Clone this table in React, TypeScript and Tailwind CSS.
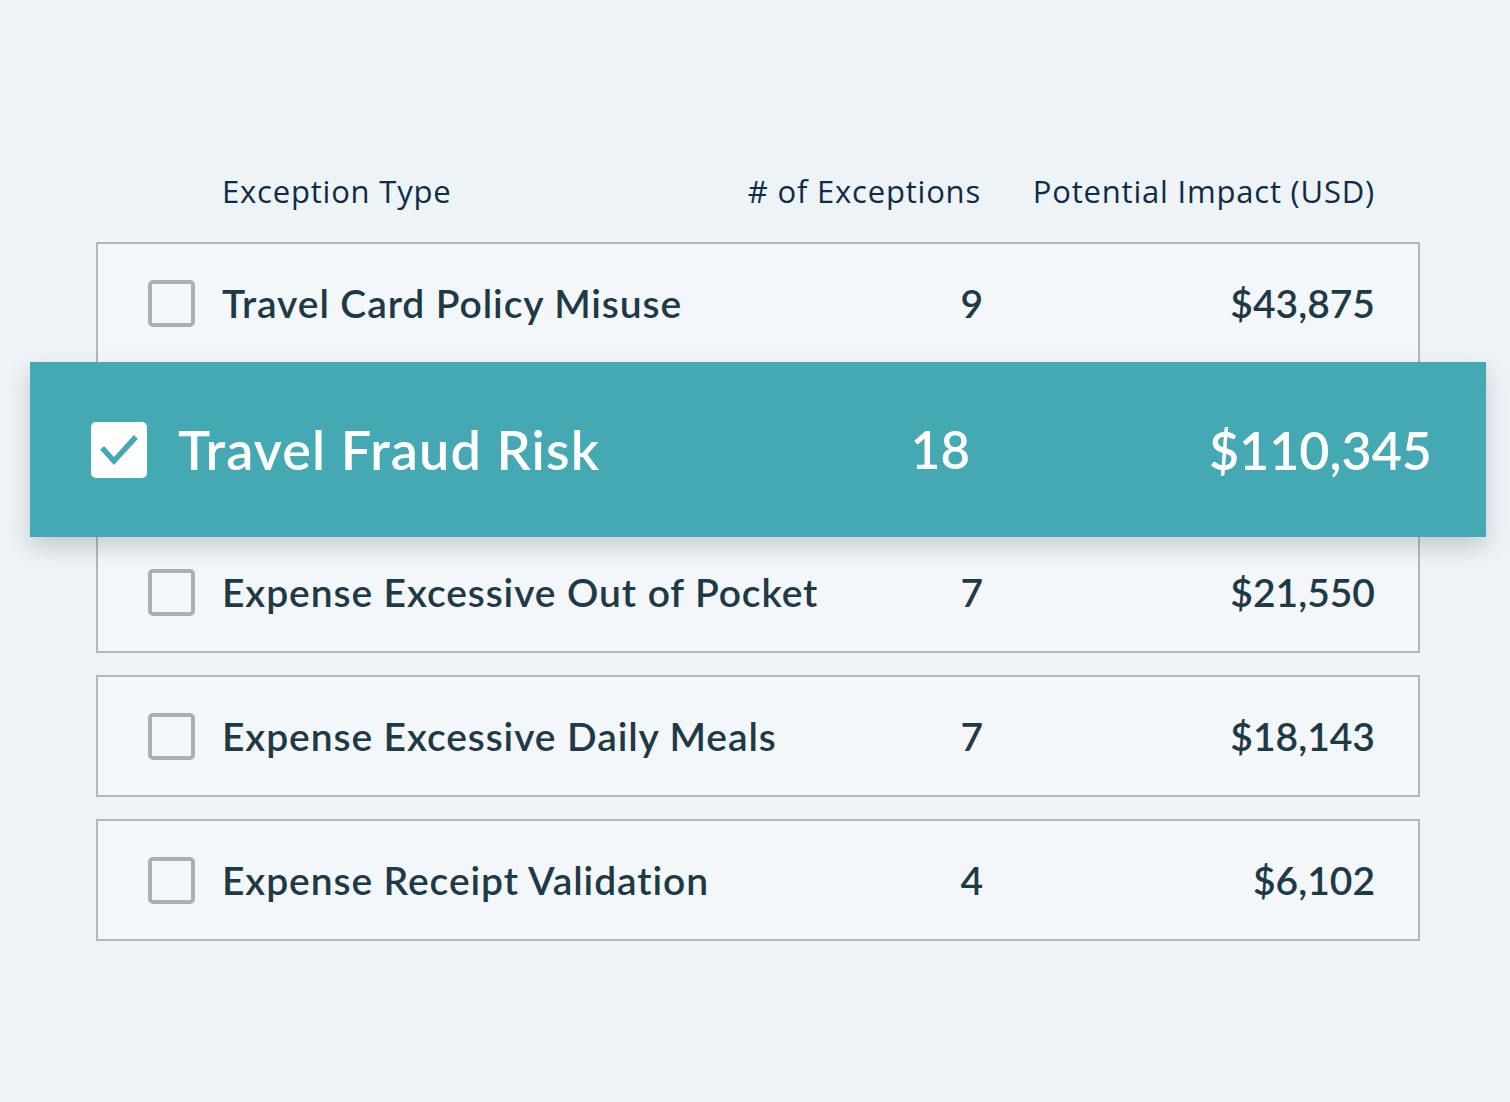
import React from "react";

const rows = [
  { name: "Travel Card Policy Misuse", count: "9", amount: "$43,875", active: false },
  { name: "Travel Fraud Risk", count: "18", amount: "$110,345", active: true },
  { name: "Expense Excessive Out of Pocket", count: "7", amount: "$21,550", active: false },
  { name: "Expense Excessive Daily Meals", count: "7", amount: "$18,143", active: false },
  { name: "Expense Receipt Validation", count: "4", amount: "$6,102", active: false },
];

const font = { fontFamily: "Lato, 'Open Sans', sans-serif" };
const headFont = { fontFamily: "'Open Sans', Lato, sans-serif" };

export default function App() {
  return (
    <div className="min-h-[1102px] w-[1510px] bg-[#eef3f6]" style={font}>
      <div className="pt-[166px] pl-[96px] w-[1420px]">
        <div
          className="flex h-[50px] items-center pl-[126px] pr-[45px] text-[31px] font-medium text-[#0f2d48] tracking-[0.8px]"
          style={headFont}
        >
          <div className="flex-1">Exception Type</div>
          <div className="w-[300px] text-right pr-[2px]">
            # of Exceptions
          </div>
          <div className="w-[392px] text-right">Potential Impact (USD)</div>
        </div>
        <div className="mt-[26px] flex flex-col gap-[22px]">
          {rows.map((r) =>
            r.active ? (
              <div
                key={r.name}
                className="relative z-10 mx-[-66px] mt-[-24px] mb-[-28px] flex h-[175px] items-center bg-[#44a9b3] pl-[61px] pr-[54px] shadow-[0_10px_22px_rgba(40,60,70,0.22)] text-white"
              >
                <div className="flex h-[56px] w-[56px] items-center justify-center rounded-[5px] bg-white">
                  <svg width="40" height="40" viewBox="0 0 40 40" fill="none">
                    <path
                      d="M5 20 L15 31 L35 9"
                      stroke="#44a9b3"
                      strokeWidth="5.5"
                      strokeLinecap="square"
                      strokeLinejoin="miter"
                    />
                  </svg>
                </div>
                <div className="ml-[31px] flex-1 text-[54px] font-semibold leading-none tracking-[1.1px]">
                  {r.name}
                </div>
                <div className="w-[100px] text-right text-[51px] font-semibold leading-none">
                  {r.count}
                </div>
                <div className="w-[462px] text-right text-[52px] font-semibold leading-none">
                  {r.amount}
                </div>
              </div>
            ) : (
              <div
                key={r.name}
                className="flex h-[122px] items-center border-2 border-[#b3b8bb] bg-[#f3f7f9] pl-[50px] pr-[43px] text-[#1e3a46]"
              >
                <div className="h-[47px] w-[47px] rounded-[5px] border-[4px] border-[#a9b1b6] bg-[#f3f7f9]" />
                <div className="ml-[27px] flex-1 text-[39px] font-semibold leading-none tracking-[0.9px]">
                  {r.name}
                </div>
                <div className="w-[100px] text-right text-[39px] font-semibold leading-none">
                  {r.count}
                </div>
                <div className="w-[392px] text-right text-[39px] font-semibold leading-none">
                  {r.amount}
                </div>
              </div>
            )
          )}
        </div>
      </div>
    </div>
  );
}
